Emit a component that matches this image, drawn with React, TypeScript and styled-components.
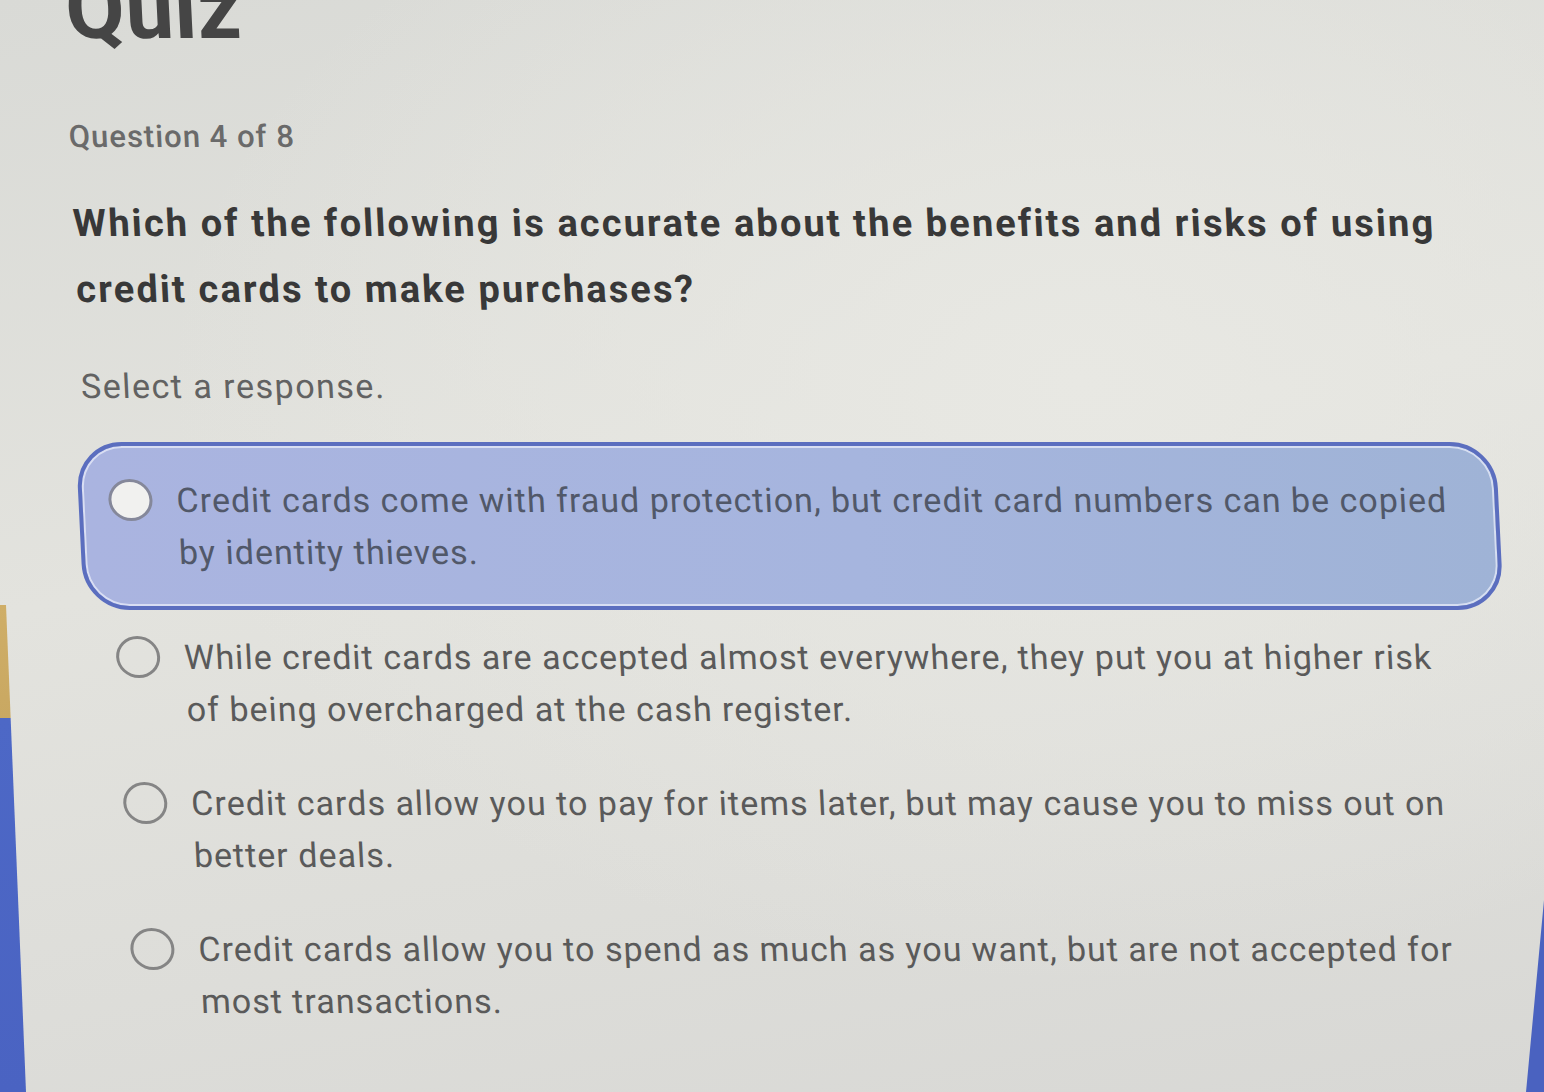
import React, { useState } from "react";
import styled, { createGlobalStyle } from "styled-components";

const GlobalStyle = createGlobalStyle`
  html, body {
    margin: 0;
    padding: 0;
    height: 100%;
  }
  body {
    background: #e0e0dc;
    font-family: Roboto, "Liberation Sans", Arial, sans-serif;
    overflow: hidden;
  }
`;

const Screen = styled.div`
  display: flex;
  height: 100vh;
  overflow: hidden;
  background:
    radial-gradient(ellipse at 70% 35%, #e8e8e3 0%, rgba(232, 232, 227, 0) 60%),
    linear-gradient(170deg, #d9dad6 0%, #e3e3de 45%, #d8d8d5 100%);
`;

const EdgeStripe = styled.div<{ $side: "left" | "right" }>`
  flex: 0 0 ${(p) => (p.$side === "left" ? 26 : 18)}px;
  height: 100%;
  background: ${(p) =>
    p.$side === "left"
      ? "linear-gradient(to bottom, transparent 0, transparent 605px, #cfae67 605px, #c9a862 718px, #4d68c6 718px, #4a63c2 100%)"
      : "#4a62c0"};
  clip-path: ${(p) =>
    p.$side === "left"
      ? "polygon(0 605px, 6px 605px, 26px 100%, 0 100%)"
      : "polygon(100% 900px, 100% 100%, 0 100%)"};
`;

const Main = styled.main`
  flex: 1;
  display: flex;
  flex-direction: column;
  padding: 0 0 0 36px;
  transform: skewX(2.8deg);
  transform-origin: top left;
`;

const Title = styled.h1`
  margin: -34px 0 0 3px;
  font-size: 86px;
  line-height: 86px;
  font-weight: 700;
  color: #454545;
  letter-spacing: 0.5px;
`;

const Counter = styled.div`
  margin-top: 65px;
  font-size: 31px;
  line-height: 40px;
  font-weight: 500;
  letter-spacing: 1px;
  color: #6a6a6a;
`;

const Prompt = styled.h2`
  margin: 33px 0 0;
  max-width: 1420px;
  font-size: 38px;
  line-height: 66px;
  font-weight: 700;
  letter-spacing: 2.1px;
  color: #383838;
`;

const Hint = styled.div`
  margin-top: 42px;
  font-size: 34px;
  line-height: 44px;
  letter-spacing: 1.5px;
  color: #626262;
`;

const OptionList = styled.div`
  display: flex;
  flex-direction: column;
  margin: 34px 0 0 -8px;
  width: 1420px;
`;

const Option = styled.label<{ $selected: boolean }>`
  display: flex;
  align-items: flex-start;
  gap: 24px;
  padding: ${(p) => (p.$selected ? "28px 26px" : "17px 26px")};
  border: 4px solid ${(p) => (p.$selected ? "#5b6ebf" : "transparent")};
  border-radius: 46px;
  background: ${(p) =>
    p.$selected
      ? "linear-gradient(to right, #aab4e0 0%, #a6b5de 55%, #9fb3d6 100%)"
      : "transparent"};
  box-shadow: ${(p) =>
    p.$selected ? "inset 0 0 0 2px rgba(232, 236, 250, 0.75)" : "none"};
  cursor: pointer;
`;

const Radio = styled.span<{ $selected: boolean }>`
  flex: 0 0 44px;
  height: 42px;
  margin-top: 5px;
  box-sizing: border-box;
  border-radius: 50%;
  border: 3px solid ${(p) => (p.$selected ? "#85889a" : "#858585")};
  background: ${(p) => (p.$selected ? "#f1f1ef" : "transparent")};
`;

const OptionText = styled.span<{ $selected: boolean }>`
  display: flex;
  flex-direction: column;
  font-size: 34px;
  line-height: 52px;
  letter-spacing: 1px;
  color: ${(p) => (p.$selected ? "#515869" : "#5a5a5a")};
`;

const TextLine = styled.span`
  white-space: nowrap;
`;

const answers: string[][] = [
  [
    "Credit cards come with fraud protection, but credit card numbers can be copied",
    "by identity thieves.",
  ],
  [
    "While credit cards are accepted almost everywhere, they put you at higher risk",
    "of being overcharged at the cash register.",
  ],
  [
    "Credit cards allow you to pay for items later, but may cause you to miss out on",
    "better deals.",
  ],
  [
    "Credit cards allow you to spend as much as you want, but are not accepted for",
    "most transactions.",
  ],
];

export default function App() {
  const [selected, setSelected] = useState(0);
  return (
    <>
      <GlobalStyle />
      <Screen>
        <EdgeStripe $side="left" />
        <Main>
          <Title>Quiz</Title>
          <Counter>Question 4 of 8</Counter>
          <Prompt>
            Which of the following is accurate about the benefits and risks of using credit
            cards to make purchases?
          </Prompt>
          <Hint>Select a response.</Hint>
          <OptionList role="radiogroup">
            {answers.map((lines, i) => (
              <Option key={i} $selected={i === selected} onClick={() => setSelected(i)}>
                <Radio $selected={i === selected} />
                <OptionText $selected={i === selected}>
                  {lines.map((line) => (
                    <TextLine key={line}>{line}</TextLine>
                  ))}
                </OptionText>
              </Option>
            ))}
          </OptionList>
        </Main>
        <EdgeStripe $side="right" />
      </Screen>
    </>
  );
}
